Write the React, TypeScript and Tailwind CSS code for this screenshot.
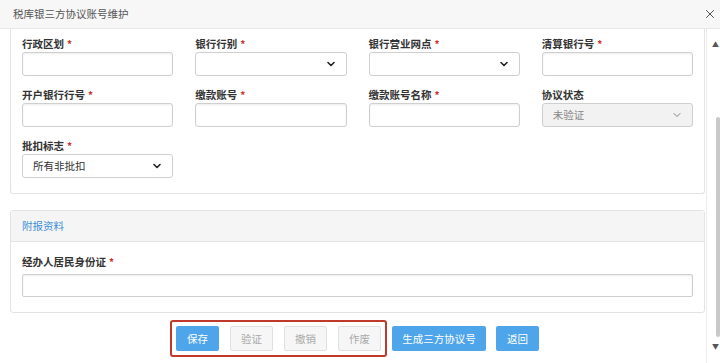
import { ChevronDown, X } from "lucide-react";

const font = { fontFamily: '"Noto Sans CJK SC", "Noto Sans", sans-serif' };

function Label({ text, required }: { text: string; required?: boolean }) {
  return (
    <div className="h-[16px] leading-[16px] text-[10.5px] font-bold text-[#333] whitespace-nowrap">
      {text}
      {required && <span className="ml-[3px] text-[#c9302c] font-bold text-[10px]">*</span>}
    </div>
  );
}

function TextInput() {
  return (
    <div className="h-[24px] border border-[#cfcfcf] rounded-[3px] bg-white shadow-[inset_0_1px_2px_rgba(0,0,0,0.08)]" />
  );
}

function Select({ value, disabled }: { value?: string; disabled?: boolean }) {
  return (
    <div
      className={
        "h-[24px] border border-[#cfcfcf] rounded-[3px] flex items-center justify-between pl-[10px] pr-[9px] text-[10.5px] " +
        (disabled ? "bg-[#f2f2f2] text-[#888]" : "bg-white text-[#333]")
      }
    >
      <span>{value}</span>
      {disabled ? (
        <ChevronDown size={12} strokeWidth={1.8} className="text-[#777]" />
      ) : (
        <ChevronDown size={12} strokeWidth={3.2} className="text-[#222]" />
      )}
    </div>
  );
}

function Field({ label, required, children }: { label: string; required?: boolean; children: React.ReactNode }) {
  return (
    <div className="flex flex-col">
      <Label text={label} required={required} />
      {children}
    </div>
  );
}

function Btn({ text, primary, wide }: { text: string; primary?: boolean; wide?: boolean }) {
  return (
    <div
      className={
        "h-[25px] flex items-center justify-center rounded-[2px] text-[10.5px] " +
        (wide ? "w-[94px] " : "w-[43px] ") +
        (primary
          ? "bg-[#4ea5e9] text-white"
          : "bg-[#f6f6f6] border border-[#e0e0e0] text-[#aaa]")
      }
    >
      {text}
    </div>
  );
}

export default function App() {
  return (
    <div className="w-[720px] h-[363px] bg-white flex flex-col overflow-hidden" style={font}>
      <div className="h-[29px] shrink-0 bg-[#f7f7f7] border-b border-[#e8e8e8] flex items-center justify-between pl-[13px] pr-[3px]">
        <span className="text-[10.5px] text-[#555]">税库银三方协议账号维护</span>
        <X size={14} strokeWidth={1.6} className="text-[#444]" />
      </div>

      <div className="flex flex-1 min-h-0">
        <div className="flex-1 pl-[10px] pr-[1px] flex flex-col">
          <div className="border-x border-b border-[#e3e3e3] rounded-b-[3px] px-[11px] pt-[7px] pb-[15px]">
            <div className="grid grid-cols-4 gap-x-[22px] gap-y-[11px]">
              <Field label="行政区划" required>
                <TextInput />
              </Field>
              <Field label="银行行别" required>
                <Select />
              </Field>
              <Field label="银行营业网点" required>
                <Select />
              </Field>
              <Field label="清算银行号" required>
                <TextInput />
              </Field>
              <Field label="开户银行行号" required>
                <TextInput />
              </Field>
              <Field label="缴款账号" required>
                <TextInput />
              </Field>
              <Field label="缴款账号名称" required>
                <TextInput />
              </Field>
              <Field label="协议状态">
                <Select value="未验证" disabled />
              </Field>
              <Field label="批扣标志" required>
                <Select value="所有非批扣" />
              </Field>
            </div>
          </div>

          <div className="mt-[16px] border border-[#e3e3e3] rounded-[3px]">
            <div className="h-[31px] bg-[#f5f5f5] border-b border-[#e3e3e3] flex items-center px-[11px]">
              <span className="text-[10.5px] text-[#3a8fd8]">附报资料</span>
            </div>
            <div className="px-[11px] pt-[12px] pb-[15px]">
              <Label text="经办人居民身份证" required />
              <div className="mt-[4px] h-[23px] border border-[#cfcfcf] rounded-[2px] bg-white shadow-[inset_0_1px_2px_rgba(0,0,0,0.08)]" />
            </div>
          </div>

          <div className="mt-[7px] ml-[160px] flex items-center gap-[5px]">
            <div className="border-2 border-[#c0392b] rounded-[3px] p-[4px] flex gap-[11px]">
              <Btn text="保存" primary />
              <Btn text="验证" />
              <Btn text="撤销" />
              <Btn text="作废" />
            </div>
            <Btn text="生成三方协议号" primary wide />
            <div className="ml-[5px]">
              <Btn text="返回" primary />
            </div>
          </div>
        </div>

        <div className="w-[14px] shrink-0 relative border-l border-[#ececec]">
          <div className="absolute right-[1px] top-[12px] text-[7px] text-[#555] leading-none">▲</div>
          <div className="absolute right-0 top-[88px] w-[4px] h-[220px] bg-[#c9c9c9] rounded-[2px]" />
          <div className="absolute right-[1px] top-[314px] text-[7px] text-[#555] leading-none">▼</div>
        </div>
      </div>
    </div>
  );
}
